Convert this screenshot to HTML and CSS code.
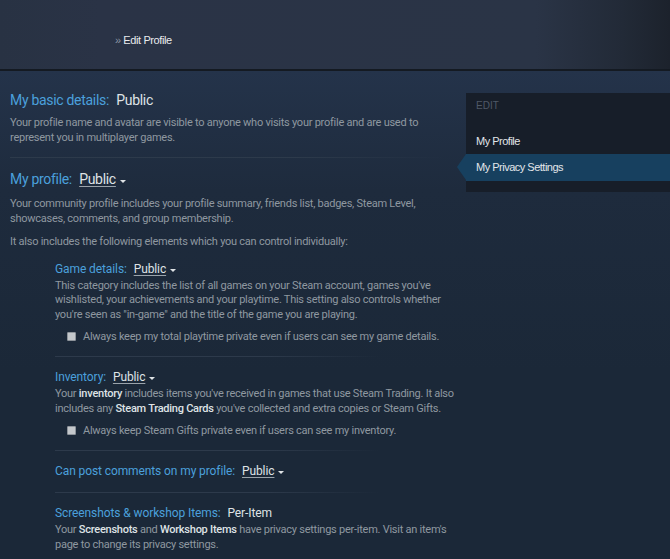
FILE: index.html
```html
<!DOCTYPE html>
<html>
<head>
<meta charset="utf-8">
<link rel="stylesheet" href="styles.css">
</head>
<body>
<header class="top">
  <div class="crumb"><span class="raquo">»</span> Edit Profile</div>
</header>
<div class="band"></div>
<div class="page">
  <main class="main">
    <section class="block">
      <h2 class="heading">My basic details: <span class="val">Public</span></h2>
      <p class="desc">Your profile name and avatar are visible to anyone who visits your profile and are used to represent you in multiplayer games.</p>
    </section>
    <div class="sep"></div>
    <section class="block">
      <h2 class="heading">My profile: <span class="val link">Public</span><span class="caret"></span></h2>
      <p class="desc lower">Your community profile includes your profile summary, friends list, badges, Steam Level, showcases, comments, and group membership.</p>
      <p class="desc gap">It also includes the following elements which you can control individually:</p>
    </section>
    <div class="sub">
      <section class="item">
        <h3 class="subhead">Game details: <span class="val link">Public</span><span class="caret"></span></h3>
        <p class="desc">This category includes the list of all games on your Steam account, games you've wishlisted, your achievements and your playtime. This setting also controls whether you're seen as "in-game" and the title of the game you are playing.</p>
        <label class="check"><span class="box"></span>Always keep my total playtime private even if users can see my game details.</label>
      </section>
      <div class="sep short"></div>
      <section class="item">
        <h3 class="subhead">Inventory: <span class="val link">Public</span><span class="caret"></span></h3>
        <p class="desc">Your <b>inventory</b> includes items you've received in games that use Steam Trading. It also includes any <b>Steam Trading Cards</b> you've collected and extra copies or Steam Gifts.</p>
        <label class="check"><span class="box"></span>Always keep Steam Gifts private even if users can see my inventory.</label>
      </section>
      <div class="sep short"></div>
      <section class="item">
        <h3 class="subhead">Can post comments on my profile: <span class="val link">Public</span><span class="caret"></span></h3>
      </section>
      <div class="sep short"></div>
      <section class="item">
        <h3 class="subhead">Screenshots &amp; workshop Items: <span class="val">Per-Item</span></h3>
        <p class="desc">Your <b>Screenshots</b> and <b>Workshop Items</b> have privacy settings per-item. Visit an item's page to change its privacy settings.</p>
      </section>
    </div>
  </main>
  <aside class="side">
    <div class="sidebox">
      <div class="sidetitle">EDIT</div>
      <div class="sidelink">My Profile</div>
      <div class="sidelink active">My Privacy Settings</div>
    </div>
  </aside>
</div>
</body>
</html>
```
FILE: styles.css
```css
html, body {
  margin: 0;
  padding: 0;
  background: #1b2838;
  height: 100%;
  overflow: hidden;
}
body {
  font-family: Roboto, "Noto Sans", Arial, sans-serif;
  color: #8f98a0;
}
.top {
  height: 69px;
  background: linear-gradient(90deg, #283243 0%, #2a3346 15%, #2a3446 80%, #222a37 93%, #1c222c 100%);
  border-bottom: 2px solid #141a22;
  box-sizing: content-box;
}
.crumb {
  padding: 34px 0 0 115px;
  font-family: "Liberation Sans", Arial, sans-serif;
  font-size: 11px;
  letter-spacing: -0.4px;
  color: #e8ebee;
}
.raquo { color: #8a95a3; }
.band {
  height: 22px;
  margin-bottom: -22px;
  background: linear-gradient(180deg, #27395a 0%, #1f2d42 100%);
}
.page {
  display: flex;
  align-items: flex-start;
  background: linear-gradient(180deg, #24334a 0px, #1e2b3d 120px, #1b2838 300px);
}
.main {
  width: 446px;
  margin-left: 10px;
  padding-top: 20px;
}
.heading {
  margin: 0;
  font-weight: normal;
  font-size: 14px;
  letter-spacing: -0.3px;
  line-height: 18px;
  color: #4ba0dc;
}
.val { color: #dfe3e6; margin-left: 4px; }
.link { text-decoration: underline; text-decoration-color: #9aa3ab; text-underline-offset: 2px; }
.caret {
  display: inline-block;
  width: 0; height: 0;
  border-left: 3px solid transparent;
  border-right: 3px solid transparent;
  border-top: 3px solid #dfe3e6;
  margin-left: 4px;
  vertical-align: 1px;
}
.desc {
  margin: 7px 0 0;
  font-size: 11px;
  letter-spacing: -0.25px;
  line-height: 14.5px;
  color: #8f98a0;
}
.desc.lower { margin-top: 9px; }
.desc b { color: #dfe3e6; font-weight: 500; }
.desc.gap { margin-top: 9px; }
.sep {
  height: 1px;
  margin: 12px 10px 12px 0;
  background: linear-gradient(90deg, #2d3a4b 0%, #2d3a4b 65%, rgba(45,58,75,0) 100%);
}
.sep.short {
  margin: 12px 76px 12px 0;
}
.sub {
  margin: 11px 0 0 45px;
}
.subhead {
  margin: 0;
  font-weight: normal;
  font-size: 12px;
  letter-spacing: -0.1px;
  line-height: 17px;
  color: #4ba0dc;
}
.item .desc { margin-top: 1px; }
.check {
  display: flex;
  align-items: center;
  margin: 7px 0 0 12px;
  font-size: 11px;
  letter-spacing: -0.25px;
  line-height: 15px;
  color: #8f98a0;
}
.box {
  width: 7px;
  height: 7px;
  background: #c3c7cb;
  border: 1px solid #8d939a;
  border-radius: 1px;
  margin-right: 7px;
}
.side {
  margin-left: 10px;
  padding-top: 22px;
  flex: 1;
}
.sidebox {
  background: #171e29;
  padding: 6px 0 11px;
  font-family: "Liberation Sans", Arial, sans-serif;
}
.sidetitle {
  font-size: 10px;
  color: #4f5967;
  padding-left: 10px;
  line-height: 14px;
}
.sidelink {
  font-size: 11px;
  letter-spacing: -0.5px;
  color: #e2e6ea;
  padding-left: 10px;
  line-height: 26px;
}
.sidetitle + .sidelink { margin-top: 15px; }
.active {
  line-height: 27px;
  background: #17405f;
  position: relative;
}
.active::before {
  content: "";
  position: absolute;
  left: -9px;
  top: 0;
  border-top: 13.5px solid transparent;
  border-bottom: 13.5px solid transparent;
  border-right: 9px solid #17405f;
}
```
